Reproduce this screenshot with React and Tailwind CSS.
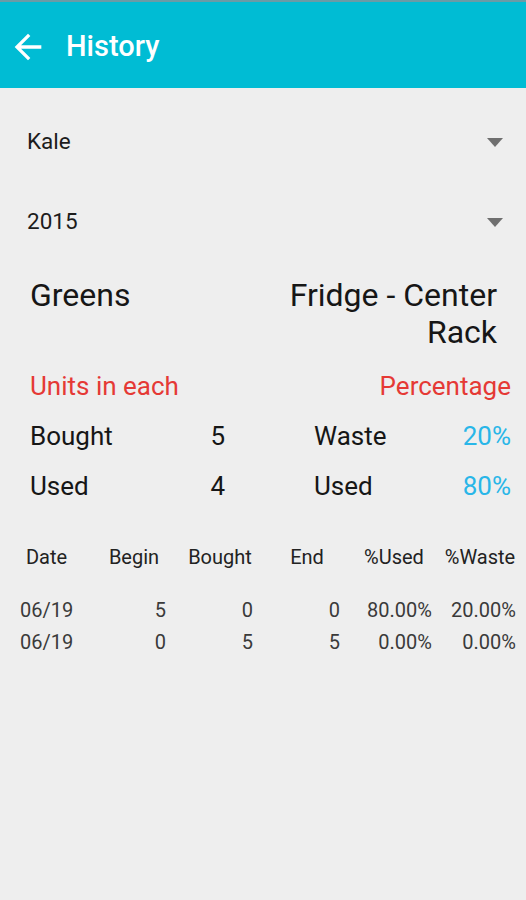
import React from "react";

function Caret() {
  return (
    <svg width="16" height="9" viewBox="0 0 16 9" className="block">
      <path d="M0 0 L16 0 L8 9 Z" fill="#6f6f6f" />
    </svg>
  );
}

function Dropdown({ label, mt }) {
  return (
    <div className={`flex h-[48px] items-center justify-between pl-[27px] pr-[23px] ${mt}`}>
      <span className="text-[22.5px] text-[#1c1c1c]">{label}</span>
      <Caret />
    </div>
  );
}

const rows = [
  ["06/19", "5", "0", "0", "80.00%", "20.00%"],
  ["06/19", "0", "5", "5", "0.00%", "0.00%"],
];

const cols = [
  { w: "w-[53px]", ml: "ml-[20px]" },
  { w: "w-[64px]", ml: "ml-[29px]" },
  { w: "w-[66px]", ml: "ml-[21px]" },
  { w: "w-[66px]", ml: "ml-[21px]" },
  { w: "w-[76px]", ml: "ml-[16px]" },
  { w: "w-[72px]", ml: "ml-[12px]" },
];

const headers = ["Date", "Begin", "Bought", "End", "%Used", "%Waste"];

export default function App() {
  return (
    <div className="w-[526px] min-h-[900px] bg-[#eeeeee] font-['Roboto',sans-serif]">
      <header className="flex h-[88px] items-center border-t-2 border-[#6a9ba6] bg-[#00bcd4] pt-[4px]">
        <svg width="40" height="40" viewBox="0 0 24 24" className="ml-[8px]">
          <path
            d="M20 11H7.83l5.59-5.59L12 4l-8 8 8 8 1.41-1.41L7.83 13H20v-2z"
            fill="#ffffff"
          />
        </svg>
        <h1 className="ml-[18px] text-[29px] font-medium text-white">History</h1>
      </header>

      <Dropdown label="Kale" mt="mt-[30px]" />
      <Dropdown label="2015" mt="mt-[32px]" />

      <div className="mt-[31px] flex justify-between pl-[30px] pr-[29px] text-[32px] leading-[37px] text-[#161616]">
        <span>Greens</span>
        <span className="text-right">
          Fridge - Center
          <br />
          Rack
        </span>
      </div>

      <div className="mt-[17px] flex h-[36px] items-center justify-between pl-[30px] pr-[15px] text-[26px] text-[#e53935]">
        <span>Units in each</span>
        <span>Percentage</span>
      </div>

      <div className="mt-[7px]">
        {[
          ["Bought", "5", "Waste", "20%"],
          ["Used", "4", "Used", "80%"],
        ].map((r, i) => (
          <div key={i} className="flex h-[50px] items-center text-[26px] text-[#161616]">
            <span className="ml-[30px] w-[170px]">{r[0]}</span>
            <span className="w-[25px] text-right">{r[1]}</span>
            <span className="ml-[89px] w-[120px]">{r[2]}</span>
            <span className="w-[77px] text-right text-[#29b6e8]">{r[3]}</span>
          </div>
        ))}
      </div>

      <div className="mt-[31px] flex h-[30px] items-center text-[20px] text-[#222222]">
        {headers.map((h, i) => (
          <span key={i} className={`${cols[i].w} ${cols[i].ml} text-center whitespace-nowrap`}>
            {h}
          </span>
        ))}
      </div>

      <div className="mt-[22px]">
        {rows.map((r, ri) => (
          <div key={ri} className="flex h-[32px] items-center text-[20px] text-[#3a3a3a]">
            {r.map((c, ci) => (
              <span
                key={ci}
                className={`${cols[ci].w} ${cols[ci].ml} ${ci === 0 ? "text-left" : "text-right"} whitespace-nowrap`}
              >
                {c}
              </span>
            ))}
          </div>
        ))}
      </div>
    </div>
  );
}
